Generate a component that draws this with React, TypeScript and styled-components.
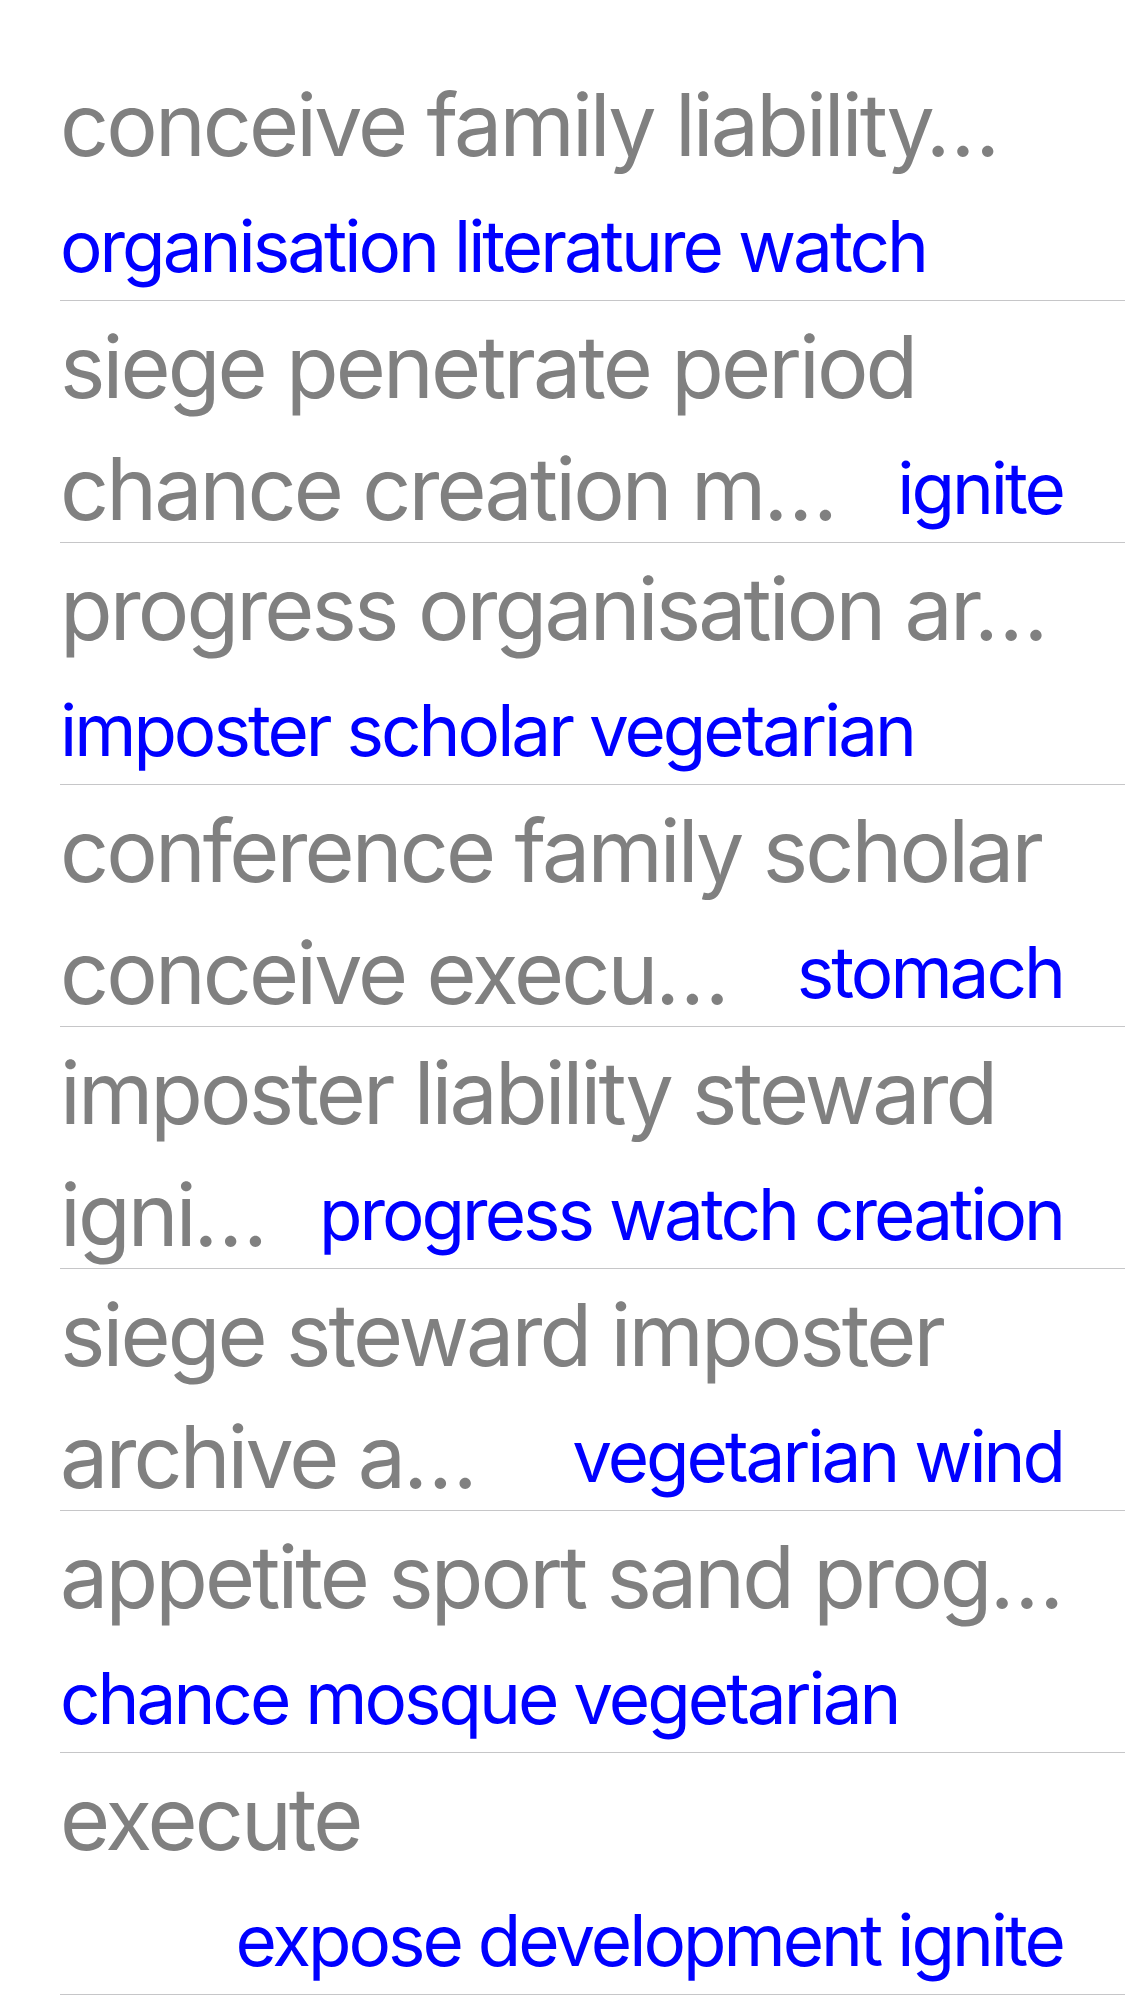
import React from 'react';
import styled, { createGlobalStyle } from 'styled-components';

const GlobalStyle = createGlobalStyle`
  html, body {
    margin: 0;
    padding: 0;
    background: #ffffff;
  }
  body {
    font-family: Inter, "Noto Sans", sans-serif;
    -webkit-font-smoothing: antialiased;
  }
`;

type Row = {
  title: string[];
  detail: string;
  align: 'left' | 'right';
};

const rows: Row[] = [
  { title: ['conceive family liability…'], detail: 'organisation literature watch', align: 'left' },
  { title: ['siege penetrate period', 'chance creation m…'], detail: 'ignite', align: 'right' },
  { title: ['progress organisation ar…'], detail: 'imposter scholar vegetarian', align: 'left' },
  { title: ['conference family scholar', 'conceive execu…'], detail: 'stomach', align: 'right' },
  { title: ['imposter liability steward', 'igni…'], detail: 'progress watch creation', align: 'right' },
  { title: ['siege steward imposter', 'archive a…'], detail: 'vegetarian wind', align: 'right' },
  { title: ['appetite sport sand prog…'], detail: 'chance mosque vegetarian', align: 'left' },
  { title: ['execute'], detail: 'expose development ignite', align: 'right' },
];

const List = styled.div`
  padding-top: 59px;
`;

// one table cell: two text lines and an inset separator at the bottom
const Cell = styled.div`
  display: flex;
  flex-direction: column;
  margin-left: 60px;
  padding: 11px 62px 3px 0;
  height: 242px;
  box-sizing: border-box;
  border-bottom: 1px solid #c6c6c8;
`;

const FirstLine = styled.div`
  display: flex;
  align-items: center;
  height: 110px;
`;

const SecondLine = styled.div<{ $align: 'left' | 'right' }>`
  display: flex;
  align-items: center;
  justify-content: ${p => (p.$align === 'right' ? 'flex-end' : 'flex-start')};
  height: 100px;
  margin-top: 17px;
`;

const Title = styled.span`
  font-size: 86px;
  line-height: 1.21;
  letter-spacing: -2.9px;
  color: #808080;
  white-space: nowrap;
`;

const Detail = styled.span<{ $push?: boolean }>`
  font-size: 71px;
  line-height: 1.21;
  letter-spacing: -3px;
  color: #0000ff;
  white-space: nowrap;
  margin-left: ${p => (p.$push ? 'auto' : '0')};
`;

const App: React.FC = () => {
  return (
    <>
      <GlobalStyle />
      <List>
        {rows.map((row, i) => (
          <Cell key={i}>
            <FirstLine>
              <Title>{row.title[0]}</Title>
            </FirstLine>
            <SecondLine $align={row.align}>
              {row.title[1] && <Title>{row.title[1]}</Title>}
              <Detail $push={row.align === 'right'}>{row.detail}</Detail>
            </SecondLine>
          </Cell>
        ))}
      </List>
    </>
  );
};

export default App;
